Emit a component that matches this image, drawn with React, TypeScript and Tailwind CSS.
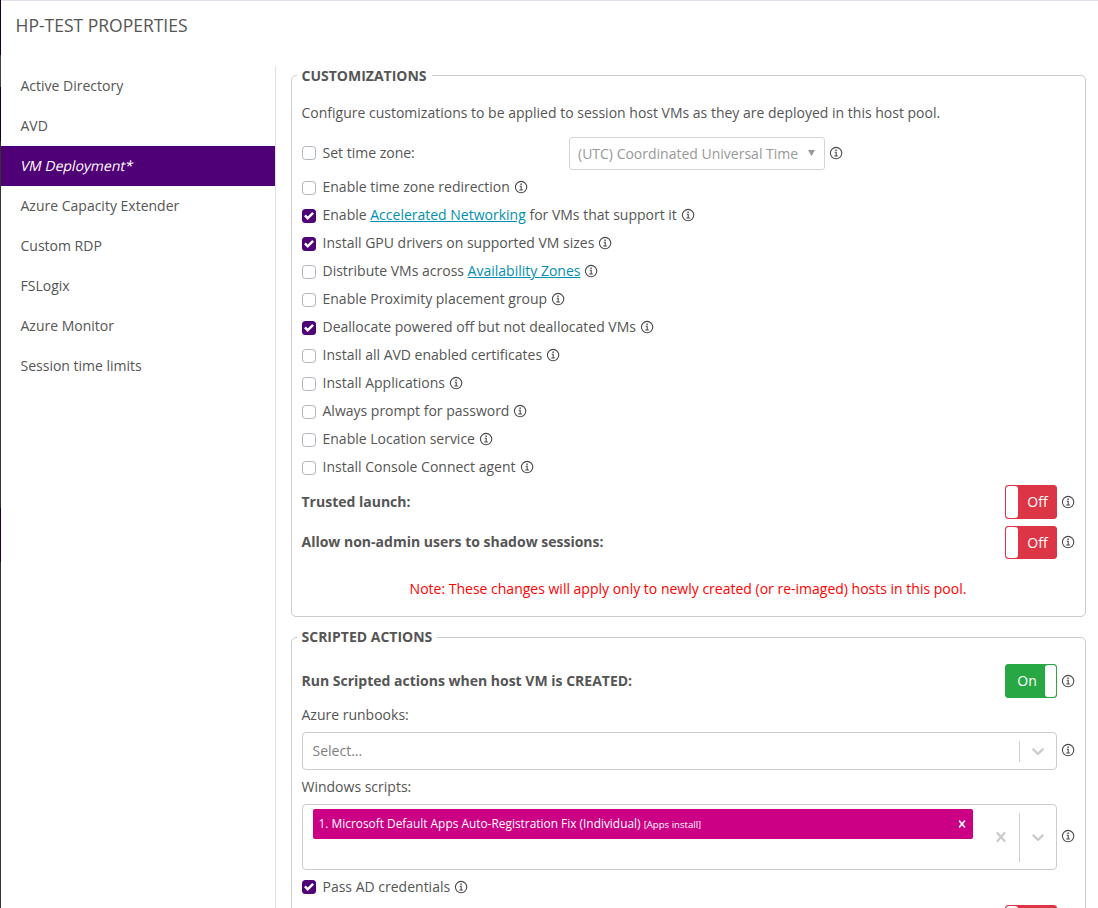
import type { ReactNode } from "react";

function Info() {
  return (
    <svg className="block size-[13px] shrink-0 overflow-visible" viewBox="0.4 0.4 13 13" fill="none" stroke="#4a4a4a">
      <circle cx="6.5" cy="6.5" r="5.7" strokeWidth="1.1" />
      <path d="M5.1 5.7h1.5v3.5M4.7 9.4h3.6" strokeWidth="1.1" />
      <path d="M5.8 3.6h1.4" strokeWidth="1.4" />
    </svg>
  );
}

function Box({ checked }: { checked?: boolean }) {
  return checked ? (
    <span className="mt-px flex size-[14px] shrink-0 items-center justify-center rounded-[3.5px] bg-[#500076]">
      <svg className="size-[10px]" viewBox="0 0 8 8" fill="#fff">
        <path d="M6.564.75l-3.59 3.612-1.538-1.55L0 4.26 2.974 7.25 8 2.193z" />
      </svg>
    </span>
  ) : (
    <span className="mt-px size-[14px] shrink-0 rounded-[3.5px] border border-[#adb5bd] bg-white" />
  );
}

function CheckRow({ checked, info = true, children }: { checked?: boolean; info?: boolean; children: ReactNode }) {
  return (
    <div className="flex h-7 items-center">
      <Box checked={checked} />
      <span className="ml-[6.5px] mr-[5px] whitespace-nowrap">{children}</span>
      {info && <Info />}
    </div>
  );
}

function Toggle({ on, label = true }: { on?: boolean; label?: boolean }) {
  return on ? (
    <div className="flex h-full max-h-[34px] w-[52px] rounded-[3px] border border-[#28a745] bg-[#28a745] text-white">
      <span className="flex flex-1 items-center justify-center pl-[3px]">On</span>
      <span className="w-[11px] rounded-[3px] bg-white" />
    </div>
  ) : (
    <div className="flex h-full max-h-[34px] w-[52px] rounded-[3px] border border-[#dc3545] bg-[#dc3545] text-white">
      <span className="w-3 rounded-[3px] bg-white" />
      <span className="flex flex-1 items-center justify-center pl-px">{label && "Off"}</span>
    </div>
  );
}

function Chevron() {
  return (
    <svg className="size-5" viewBox="0 0 20 20" fill="#ccc">
      <path d="M4.516 7.548c0.436-0.446 1.043-0.481 1.576 0l3.908 3.747 3.908-3.747c0.533-0.481 1.141-0.446 1.574 0 0.436 0.445 0.408 1.197 0 1.615-0.406 0.418-4.695 4.502-4.695 4.502-0.217 0.223-0.502 0.335-0.787 0.335s-0.57-0.112-0.789-0.335c0 0-4.287-4.084-4.695-4.502s-0.436-1.17 0-1.615z" />
    </svg>
  );
}

function Cross({ className }: { className: string }) {
  return (
    <svg className={className} viewBox="0 0 20 20" fill="currentColor">
      <path d="M14.348 14.849c-0.469 0.469-1.229 0.469-1.697 0l-2.651-3.030-2.651 3.029c-0.469 0.469-1.229 0.469-1.697 0-0.469-0.469-0.469-1.229 0-1.697l2.758-3.15-2.759-3.152c-0.469-0.469-0.469-1.228 0-1.697s1.228-0.469 1.697 0l2.652 3.031 2.651-3.031c0.469-0.469 1.228-0.469 1.697 0s0.469 1.229 0 1.697l-2.758 3.152 2.758 3.15c0.469 0.469 0.469 1.229 0 1.698z" />
    </svg>
  );
}

function Link({ children }: { children: ReactNode }) {
  return <a className="text-[#008fb0] underline">{children}</a>;
}

const nav = [
  "Active Directory",
  "AVD",
  "VM Deployment*",
  "Azure Capacity Extender",
  "Custom RDP",
  "FSLogix",
  "Azure Monitor",
  "Session time limits",
];

export default function App() {
  return (
    <div className="flex h-[908px] w-[1098px] overflow-hidden bg-white font-['Open_Sans',sans-serif] text-[14px] leading-5 text-[#555]">
      <div className="flex w-px shrink-0 flex-col bg-[#333]">
        <div className="h-[55px] bg-[#17001f]" />
        <div className="h-8 bg-[#444]" />
        <div className="h-[54px] bg-[#17001f]" />
        <div className="h-[367px]" />
        <div className="h-[54px] bg-[#1d0030]" />
      </div>
      <div className="flex min-w-0 flex-1 flex-col border-t border-[#e4dcec]">
        <h1 className="h-[65px] shrink-0 pl-[14.5px] pt-3 text-[17.5px] leading-6">HP-TEST PROPERTIES</h1>
        <div className="flex min-h-0 flex-1">
          <nav className="w-[275px] shrink-0 border-r border-[#dee2e6]">
            {nav.map((item) =>
              item === "VM Deployment*" ? (
                <div key={item} className="flex h-10 items-center bg-[#500076] pl-[20px] font-medium text-white">
                  <span className="-skew-x-12">{item}</span>
                </div>
              ) : (
                <div key={item} className="flex h-10 items-center pl-[19.5px]">{item}</div>
              ),
            )}
          </nav>
          <main className="flex min-w-0 flex-1 flex-col pl-[15px] pr-3">
            <fieldset className="h-[551px] shrink-0 rounded-[5px] border border-[#ccc] pl-[10px] pr-[10px]">
              <legend className="-ml-[5px] h-[19px] pl-[4.5px] pr-[5px] font-bold">CUSTOMIZATIONS</legend>
              <p className="-ml-[0.5px] mt-[18px]">Configure customizations to be applied to session host VMs as they are deployed in this host pool.</p>
              <div className="mt-[14px] flex h-[33px] items-center">
                <div className="w-[267px] pb-[2px]">
                  <CheckRow info={false}>Set time zone:</CheckRow>
                </div>
                <div className="mr-[5px] flex h-[33px] w-[256px] items-center justify-between rounded-[3px] border border-[#d5d5d5] pl-2 pr-[9px] text-[#999]">
                  <span className="whitespace-nowrap">(UTC) Coordinated Universal Time</span>
                  <svg className="mb-[2px] h-[6px] w-[7px]" viewBox="0 0 7 6" fill="#999"><path d="M0 0h7L3.5 6z" /></svg>
                </div>
                <Info />
              </div>
              <div className="mt-[3px]">
                <CheckRow>Enable time zone redirection</CheckRow>
                <CheckRow checked>Enable <Link>Accelerated Networking</Link> for VMs that support it</CheckRow>
                <CheckRow checked>Install GPU drivers on supported VM sizes</CheckRow>
                <CheckRow>Distribute VMs across <Link>Availability Zones</Link></CheckRow>
                <CheckRow>Enable Proximity placement group</CheckRow>
                <CheckRow checked>Deallocate powered off but not deallocated VMs</CheckRow>
                <CheckRow>Install all AVD enabled certificates</CheckRow>
                <CheckRow>Install Applications</CheckRow>
                <CheckRow>Always prompt for password</CheckRow>
                <CheckRow>Enable Location service</CheckRow>
                <CheckRow>Install Console Connect agent</CheckRow>
              </div>
              <div className="mt-1 flex h-[34px] items-center gap-[5px]">
                <b className="-ml-[0.5px] flex-1">Trusted launch:</b>
                <Toggle />
                <Info />
              </div>
              <div className="mt-1.5 flex h-[34px] items-center gap-[5px]">
                <b className="-ml-[0.5px] flex-1">Allow non-admin users to shadow sessions:</b>
                <div className="h-full pt-px">
                  <Toggle />
                </div>
                <Info />
              </div>
              <p className="-ml-px mt-5 text-center text-[#ff0000]">Note: These changes will apply only to newly created (or re-imaged) hosts in this pool.</p>
            </fieldset>
            <fieldset className="mt-2.5 h-[400px] shrink-0 rounded-[5px] border border-[#ccc] pl-[10px] pr-[10px]">
              <legend className="-ml-[5px] pl-[4.5px] pr-[4.5px] font-bold">SCRIPTED ACTIONS</legend>
              <div className="mt-[17px] flex h-[34px] items-center gap-[5px]">
                <b className="-ml-[0.5px] flex-1">Run Scripted actions when host VM is CREATED:</b>
                <Toggle on />
                <Info />
              </div>
              <div className="-ml-[0.5px] mt-[7px]">Azure runbooks:</div>
              <div className="mt-[7px] flex items-center gap-[5px]">
                <div className="flex h-[38px] flex-1 items-center rounded border border-[#ccc] pl-[9.5px] text-[#808080]">
                  <span className="flex-1">Select...</span>
                  <span className="h-[21px] w-px bg-[#ccc]" />
                  <span className="px-2"><Chevron /></span>
                </div>
                <div className="pb-px"><Info /></div>
              </div>
              <div className="-ml-[0.5px] mt-[7px]">Windows scripts:</div>
              <div className="mt-[7px] flex items-center gap-[5px]">
                <div className="flex h-[66px] flex-1 items-center rounded border border-[#ccc] pl-[10px]">
                  <div className="mt-1 flex h-[30px] w-[660px] items-center self-start rounded-[2px] bg-[#cc0085] pl-[5.5px] pr-1 text-[11.9px] text-white">
                    <span className="flex-1">1. Microsoft Default Apps Auto-Registration Fix (Individual) <span className="text-[9.6px]">[Apps install]</span></span>
                    <Cross className="size-[14px]" />
                  </div>
                  <Cross className="ml-[18px] mr-2 size-5 text-[#ccc]" />
                  <span className="h-[49px] w-px bg-[#ccc]" />
                  <span className="px-2"><Chevron /></span>
                </div>
                <div className="pb-px"><Info /></div>
              </div>
              <div className="mt-[3px] flex h-7 items-center">
                <div className="-mt-px"><Box checked /></div>
                <span className="ml-[6.5px] mr-[5px]">Pass AD credentials</span>
                <Info />
              </div>
              <div className="mt-1 flex h-[34px] items-center justify-end gap-[5px]">
                <Toggle label={false} />
                <Info />
              </div>
            </fieldset>
          </main>
        </div>
      </div>
    </div>
  );
}
